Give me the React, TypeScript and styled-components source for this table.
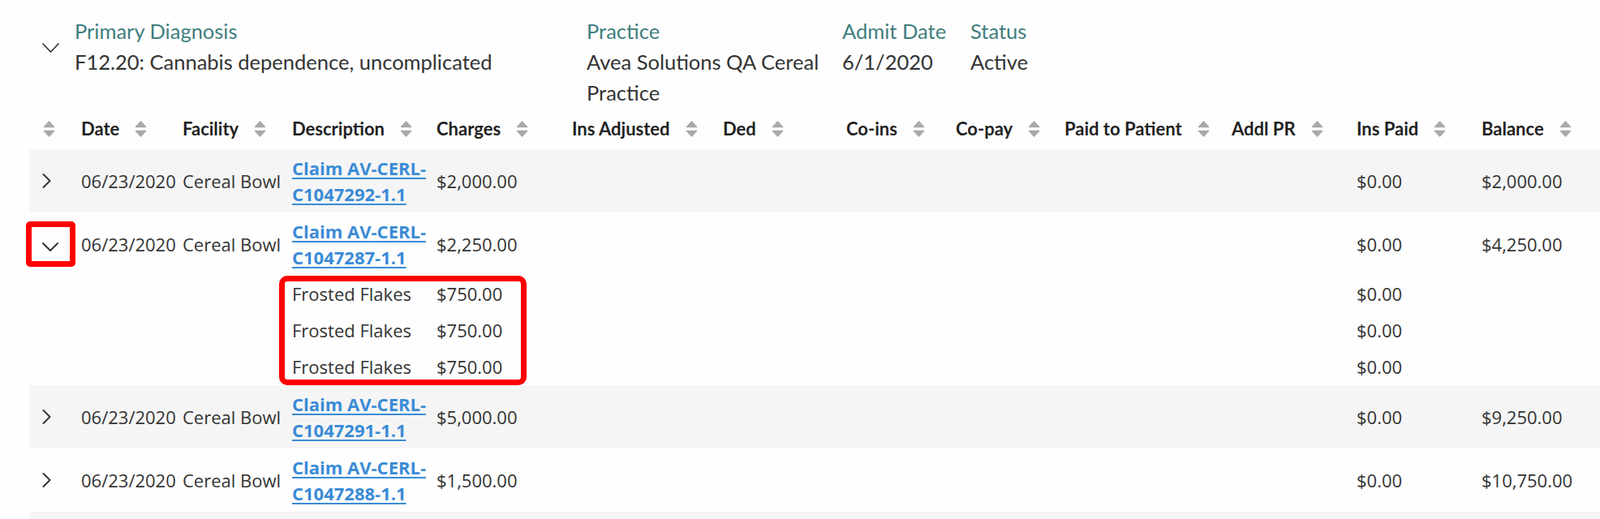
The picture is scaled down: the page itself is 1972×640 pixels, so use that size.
import styled, { createGlobalStyle } from "styled-components";

const GlobalStyle = createGlobalStyle`
  body {
    margin: 0;
    background: #fefefe;
    color: #333;
  }
`;

type Column = { key: string; label: string; width: number };

const columns: Column[] = [
  { key: "date", label: "Date", width: 125 },
  { key: "facility", label: "Facility", width: 135 },
  { key: "description", label: "Description", width: 178 },
  { key: "charges", label: "Charges", width: 167 },
  { key: "insAdjusted", label: "Ins Adjusted", width: 186 },
  { key: "ded", label: "Ded", width: 152 },
  { key: "coIns", label: "Co-ins", width: 135 },
  { key: "coPay", label: "Co-pay", width: 134 },
  { key: "paidToPatient", label: "Paid to Patient", width: 206 },
  { key: "addlPr", label: "Addl PR", width: 154 },
  { key: "insPaid", label: "Ins Paid", width: 154 },
  { key: "balance", label: "Balance", width: 150 },
];

type Line = { description: string; charges: string; insPaid: string };

type Claim = {
  date: string;
  facility: string;
  claim: string;
  charges: string;
  insPaid: string;
  balance: string;
  lines?: Line[];
};

const frosted: Line = { description: "Frosted Flakes", charges: "$750.00", insPaid: "$0.00" };

const claims: Claim[] = [
  { date: "06/23/2020", facility: "Cereal Bowl", claim: "Claim AV-CERL-C1047292-1.1", charges: "$2,000.00", insPaid: "$0.00", balance: "$2,000.00" },
  { date: "06/23/2020", facility: "Cereal Bowl", claim: "Claim AV-CERL-C1047287-1.1", charges: "$2,250.00", insPaid: "$0.00", balance: "$4,250.00", lines: [frosted, frosted, frosted] },
  { date: "06/23/2020", facility: "Cereal Bowl", claim: "Claim AV-CERL-C1047291-1.1", charges: "$5,000.00", insPaid: "$0.00", balance: "$9,250.00" },
  { date: "06/23/2020", facility: "Cereal Bowl", claim: "Claim AV-CERL-C1047288-1.1", charges: "$1,500.00", insPaid: "$0.00", balance: "$10,750.00" },
];

const SortIcon = () => (
  <SortSvg viewBox="0 0 17 22" width={17} height={22}>
    <path d="M2.5 8.5 L8.5 2 L14.5 8.5 Z" />
    <path d="M2.5 13.5 L14.5 13.5 L8.5 20 Z" />
  </SortSvg>
);

const ChevronDown = ({ w, h, stroke }: { w: number; h: number; stroke: number }) => (
  <ChevronSvg viewBox={`0 0 ${w} ${h}`} width={w} height={h} $stroke={stroke}>
    <polyline points={`1,1 ${w / 2},${h - 1} ${w - 1},1`} />
  </ChevronSvg>
);

const ChevronRight = () => (
  <ChevronSvg viewBox="0 0 11 18" width={11} height={18} $stroke={2}>
    <polyline points="1.5,1 9.5,9 1.5,17" />
  </ChevronSvg>
);

const App = () => {
  return (
    <Page>
      <GlobalStyle />
      <Summary>
        <SummaryToggle>
          <ChevronDown w={21} h={12} stroke={1.7} />
        </SummaryToggle>
        <Fields>
          <Field>
            <FieldLabel>Primary Diagnosis</FieldLabel>
            <FieldValue>F12.20: Cannabis dependence, uncomplicated</FieldValue>
          </Field>
          <Field $wrap>
            <FieldLabel>Practice</FieldLabel>
            <FieldValue>Avea Solutions QA Cereal Practice</FieldValue>
          </Field>
          <Field>
            <FieldLabel>Admit Date</FieldLabel>
            <FieldValue>6/1/2020</FieldValue>
          </Field>
          <Field>
            <FieldLabel>Status</FieldLabel>
            <FieldValue>Active</FieldValue>
          </Field>
        </Fields>
      </Summary>

      <Table>
        <colgroup>
          <col style={{ width: 60 }} />
          {columns.map((c) => (
            <col key={c.key} style={{ width: c.width }} />
          ))}
        </colgroup>
        <thead>
          <tr>
            <HeadCell $first>
              <SortIcon />
            </HeadCell>
            {columns.map((c) => (
              <HeadCell key={c.key}>
                <HeadLabel>
                  {c.label}
                  <SortIcon />
                </HeadLabel>
              </HeadCell>
            ))}
          </tr>
        </thead>
        <tbody>
          {claims.map((claim, i) => {
            const shaded = i % 2 === 0;
            const open = !!claim.lines;
            return [
              <Row key={claim.claim} $shaded={shaded}>
                <ExpandCell>
                  {open ? (
                    <Marked>
                      <ChevronDown w={20} h={11} stroke={2} />
                      <ToggleHighlight />
                    </Marked>
                  ) : (
                    <ChevronRight />
                  )}
                </ExpandCell>
                <Cell>{claim.date}</Cell>
                <Cell>{claim.facility}</Cell>
                <Cell>
                  <ClaimLink href="#">{claim.claim}</ClaimLink>
                </Cell>
                <Cell>{claim.charges}</Cell>
                <Cell />
                <Cell />
                <Cell />
                <Cell />
                <Cell />
                <Cell />
                <Cell>{claim.insPaid}</Cell>
                <Cell>{claim.balance}</Cell>
              </Row>,
              ...(claim.lines ?? []).map((line, j) => (
                <Row key={`${claim.claim}-${j}`} $shaded={shaded}>
                  <LineCell />
                  <LineCell />
                  <LineCell />
                  <LineCell>
                    {j === 0 ? (
                      <Marked>
                        {line.description}
                        <LinesHighlight />
                      </Marked>
                    ) : (
                      line.description
                    )}
                  </LineCell>
                  <LineCell>{line.charges}</LineCell>
                  <LineCell />
                  <LineCell />
                  <LineCell />
                  <LineCell />
                  <LineCell />
                  <LineCell />
                  <LineCell>{line.insPaid}</LineCell>
                  <LineCell />
                </Row>
              )),
            ];
          })}
          <Row $shaded>
            <SpacerCell colSpan={columns.length + 1} />
          </Row>
        </tbody>
      </Table>
    </Page>
  );
};

export default App;

const Page = styled.div`
  width: 1972px;
  height: 640px;
  overflow: hidden;
`;

const Summary = styled.div`
  display: flex;
  align-items: flex-start;
  padding: 19px 0 0 52px;
  font-family: Lato, "Open Sans", sans-serif;
  font-size: 25.5px;
  line-height: 38px;
`;

const SummaryToggle = styled.div`
  display: flex;
  width: 21px;
  margin: 34px 19px 0 0;
`;

const Fields = styled.div`
  display: grid;
  grid-template-columns: 631px 315px 158px auto;
`;

const Field = styled.div<{ $wrap?: boolean }>`
  display: flex;
  flex-direction: column;
  padding-right: ${(p) => (p.$wrap ? "12px" : "0")};
`;

const FieldLabel = styled.div`
  color: #3e7e7d;
  white-space: nowrap;
`;

const FieldValue = styled.div`
  color: #333;
  min-height: 76px;
`;

const Table = styled.table`
  margin-left: 36px;
  width: 1936px;
  table-layout: fixed;
  border-collapse: collapse;
`;

const HeadCell = styled.th<{ $first?: boolean }>`
  height: 51px;
  padding: 0 4px 0 ${(p) => (p.$first ? "16px" : "4px")};
  text-align: left;
  vertical-align: middle;
  font-family: Lato, "Open Sans", sans-serif;
  font-size: 22px;
  font-weight: 700;
  color: #222;
  white-space: nowrap;
`;

const HeadLabel = styled.span`
  display: inline-flex;
  align-items: center;
  gap: 18px;
`;

const SortSvg = styled.svg`
  display: block;
  fill: #a9a9a9;
  stroke: #a9a9a9;
  stroke-width: 1.5;
  stroke-linejoin: round;
  flex: none;
`;

const ChevronSvg = styled.svg<{ $stroke: number }>`
  display: block;
  fill: none;
  stroke: #333;
  stroke-width: ${(p) => p.$stroke};
  stroke-linecap: round;
  stroke-linejoin: round;
  overflow: visible;
`;

const Row = styled.tr<{ $shaded: boolean }>`
  background: ${(p) => (p.$shaded ? "#f5f5f5" : "transparent")};
`;

const Cell = styled.td`
  padding: 7px 4px;
  vertical-align: middle;
  font-family: "Open Sans", sans-serif;
  font-size: 22px;
  line-height: 32px;
  color: #333;
`;

const ExpandCell = styled(Cell)`
  padding-left: 16px;
`;

const LineCell = styled(Cell)`
  padding: 6px 4px 7px;
`;

const SpacerCell = styled.td`
  height: 78px;
  padding: 0;
`;

const ClaimLink = styled.a`
  color: #3a8bd6;
  font-weight: 700;
  text-decoration: underline;
  text-decoration-thickness: 2px;
  text-underline-offset: 3px;
`;

const Marked = styled.span`
  position: relative;
  display: inline-block;
`;

const ToggleHighlight = styled.span`
  position: absolute;
  left: -20px;
  top: -26px;
  width: 61px;
  height: 56px;
  box-sizing: border-box;
  border: 7px solid #ff0000;
  border-radius: 5px;
  pointer-events: none;
`;

const LinesHighlight = styled.span`
  position: absolute;
  left: -16px;
  top: -6px;
  width: 305px;
  height: 135px;
  box-sizing: border-box;
  border: 7px solid #ff0000;
  border-radius: 10px;
  pointer-events: none;
`;
